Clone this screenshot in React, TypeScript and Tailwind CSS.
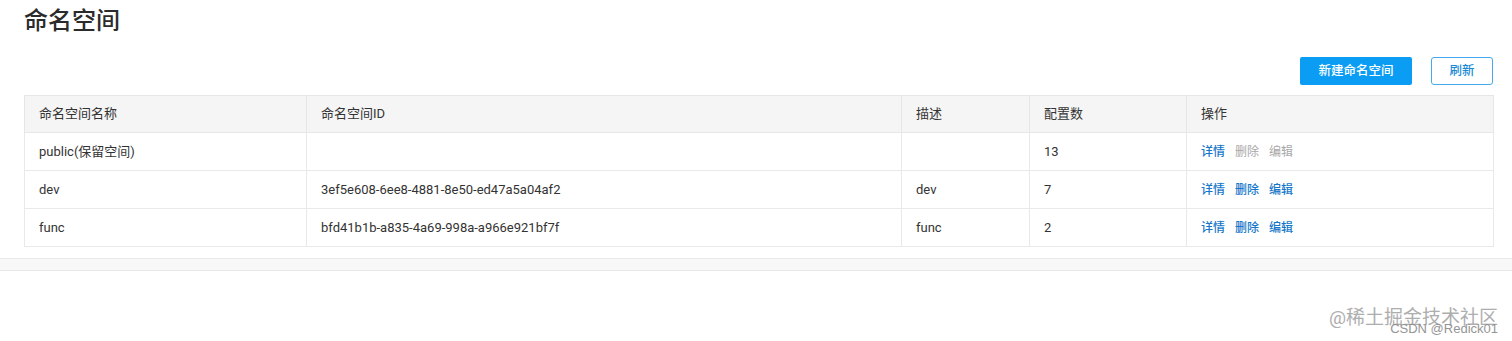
import React from "react";

const font = {
  fontFamily: 'Roboto, "Noto Sans CJK SC", "Noto Sans", sans-serif',
};

type Row = {
  name: string;
  id: string;
  desc: string;
  count: string;
  editable: boolean;
};

const rows: Row[] = [
  { name: "public(保留空间)", id: "", desc: "", count: "13", editable: false },
  { name: "dev", id: "3ef5e608-6ee8-4881-8e50-ed47a5a04af2", desc: "dev", count: "7", editable: true },
  { name: "func", id: "bfd41b1b-a835-4a69-998a-a966e921bf7f", desc: "func", count: "2", editable: true },
];

export default function App() {
  return (
    <div className="relative w-[1512px] h-[341px] bg-white overflow-hidden text-[#333]" style={font}>
      <div className="pl-[24px] pr-[19px]">
        <h1 className="pt-[4px] text-[24px] leading-[34px] font-medium text-[#2b2b2b]">命名空间</h1>
        <div className="mt-[19px] flex justify-end gap-[19px]">
          <button className="h-[28px] w-[112px] rounded-[2px] bg-[#0b9df3] text-white text-[12.5px] font-medium">
            新建命名空间
          </button>
          <button className="h-[28px] w-[62px] rounded-[3px] border border-[#45aaec] bg-white text-[#1b8ad6] text-[12.5px] font-medium">
            刷新
          </button>
        </div>
        <table className="mt-[10px] w-[1469px] table-fixed border-collapse border border-[#e6e6e6] text-[13px]">
          <colgroup>
            <col className="w-[282px]" />
            <col className="w-[595px]" />
            <col className="w-[128px]" />
            <col className="w-[157px]" />
            <col className="w-[307px]" />
          </colgroup>
          <thead>
            <tr className="h-[37px] bg-[#f5f5f5] text-[#333]">
              {["命名空间名称", "命名空间ID", "描述", "配置数", "操作"].map((h) => (
                <th key={h} className="border border-[#e6e6e6] pl-[14px] text-left font-normal">
                  {h}
                </th>
              ))}
            </tr>
          </thead>
          <tbody>
            {rows.map((r) => (
              <tr key={r.name} className="h-[38px]">
                <td className="border border-[#e9e9e9] pl-[14px]">{r.name}</td>
                <td className="border border-[#e9e9e9] pl-[14px]">{r.id}</td>
                <td className="border border-[#e9e9e9] pl-[14px]">{r.desc}</td>
                <td className="border border-[#e9e9e9] pl-[14px]">{r.count}</td>
                <td className="border border-[#e9e9e9] pl-[14px]">
                  <div className="flex gap-[10px] text-[12px] font-medium">
                    <span className="text-[#1677c9]">详情</span>
                    <span className={r.editable ? "text-[#1677c9]" : "text-[#a8a8a8] font-normal"}>删除</span>
                    <span className={r.editable ? "text-[#1677c9]" : "text-[#a8a8a8] font-normal"}>编辑</span>
                  </div>
                </td>
              </tr>
            ))}
          </tbody>
        </table>
      </div>
      <div className="mt-[11px] h-[13px] w-full border-y border-[#e8e8e8] bg-[#f8f8f8]" />
      <div className="absolute right-[14px] top-[305px] text-[19px] leading-[26px] text-[#9a9a9a] opacity-80">
        @稀土掘金技术社区
      </div>
      <div
        className="absolute right-[14px] top-[321px] text-[13px] leading-[16px] text-[#8a8a8a] opacity-90"
        style={{ fontFamily: '"Liberation Sans", Arial, sans-serif' }}
      >
        CSDN @Redick01
      </div>
    </div>
  );
}
